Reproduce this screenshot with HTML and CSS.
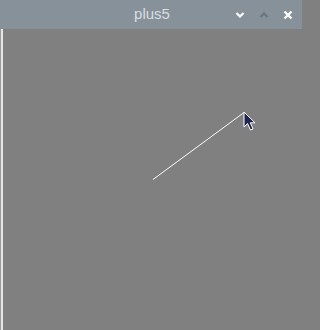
FILE: index.html
```html
<!DOCTYPE html>
<html>
<head>
<meta charset="utf-8">
<link rel="stylesheet" href="styles.css">
</head>
<body>
<div class="window">
  <div class="titlebar">
    <span class="title">plus5</span>
    <div class="controls">
      <svg class="btn" width="10" height="8" viewBox="0 0 10 8"><path d="M1.5 2 L5 5.5 L8.5 2" fill="none" stroke="#ffffff" stroke-width="2.2"/></svg>
      <svg class="btn" width="10" height="8" viewBox="0 0 10 8"><path d="M1.5 6 L5 2.5 L8.5 6" fill="none" stroke="#6b747b" stroke-width="2.2"/></svg>
      <svg class="btn" width="10" height="10" viewBox="0 0 10 10"><path d="M1.5 1.5 L8.5 8.5 M8.5 1.5 L1.5 8.5" fill="none" stroke="#ffffff" stroke-width="2.4"/></svg>
    </div>
  </div>
  <div class="content">
    <div class="edge"></div>
    <div class="canvas">
      <svg class="drawing" width="300" height="300" viewBox="0 0 300 300">
        <line x1="150" y1="150.5" x2="241" y2="83.5" stroke="#ffffff" stroke-width="1"/>
        <path d="M241 83 L241 98 L244.5 94.5 L247.5 101 L250 100 L247.3 93.8 L252 93.8 Z" fill="#1f2452" stroke="#ffffff" stroke-width="1" stroke-linejoin="round"/>
      </svg>
    </div>
  </div>
</div>
</body>
</html>
```

FILE: styles.css
```css
html, body {
  margin: 0;
  padding: 0;
  background: #808080;
}
.window {
  width: 302px;
  height: 330px;
  display: flex;
  flex-direction: column;
}
.titlebar {
  height: 29px;
  background: #87919a;
  position: relative;
  display: flex;
  align-items: center;
  justify-content: center;
  flex-shrink: 0;
}
.title {
  font-family: "Liberation Sans", Arial, sans-serif;
  font-size: 15px;
  color: #d9dde0;
  margin-top: -2px;
  margin-left: 2px;
}
.controls {
  position: absolute;
  right: 9px;
  top: 0;
  height: 29px;
  display: flex;
  align-items: center;
  gap: 14px;
}
.content {
  flex: 1;
  display: flex;
}
.edge {
  width: 2px;
  border-left: 1px solid #9a9a9a;
  background: #e6e6e6;
}
.canvas {
  flex: 1;
  background: #808080;
  position: relative;
}
.drawing {
  position: absolute;
  left: 0;
  top: 0;
}
```
